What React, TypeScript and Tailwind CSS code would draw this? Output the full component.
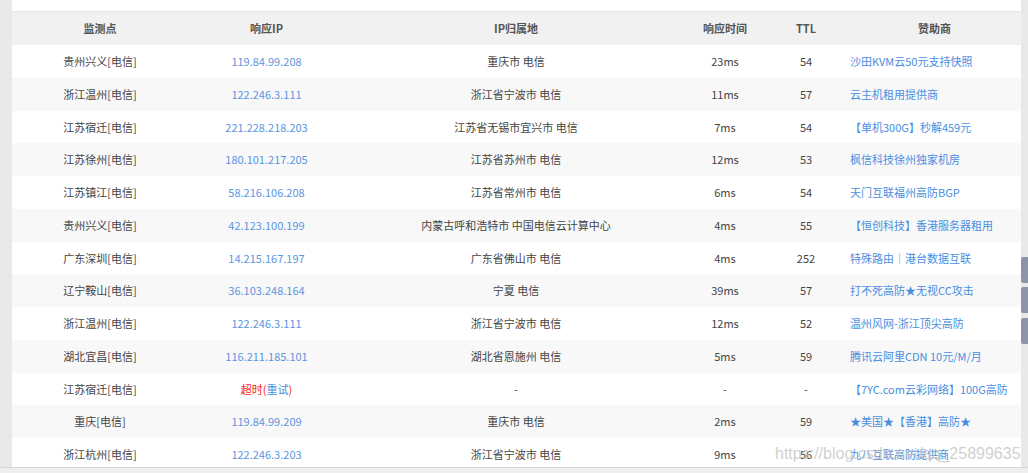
const rows = [
  { loc: "贵州兴义[电信]", ip: "119.84.99.208", area: "重庆市 电信", time: "23ms", ttl: "54", sponsor: "沙田KVM云50元支持快照" },
  { loc: "浙江温州[电信]", ip: "122.246.3.111", area: "浙江省宁波市 电信", time: "11ms", ttl: "57", sponsor: "云主机租用提供商" },
  { loc: "江苏宿迁[电信]", ip: "221.228.218.203", area: "江苏省无锡市宜兴市 电信", time: "7ms", ttl: "54", sponsor: "【单机300G】秒解459元" },
  { loc: "江苏徐州[电信]", ip: "180.101.217.205", area: "江苏省苏州市 电信", time: "12ms", ttl: "53", sponsor: "枫信科技徐州独家机房" },
  { loc: "江苏镇江[电信]", ip: "58.216.106.208", area: "江苏省常州市 电信", time: "6ms", ttl: "54", sponsor: "天门互联福州高防BGP" },
  { loc: "贵州兴义[电信]", ip: "42.123.100.199", area: "内蒙古呼和浩特市 中国电信云计算中心", time: "4ms", ttl: "55", sponsor: "【恒创科技】香港服务器租用" },
  { loc: "广东深圳[电信]", ip: "14.215.167.197", area: "广东省佛山市 电信", time: "4ms", ttl: "252", sponsor: "特殊路由｜港台数据互联" },
  { loc: "辽宁鞍山[电信]", ip: "36.103.248.164", area: "宁夏 电信", time: "39ms", ttl: "57", sponsor: "打不死高防★无视CC攻击" },
  { loc: "浙江温州[电信]", ip: "122.246.3.111", area: "浙江省宁波市 电信", time: "12ms", ttl: "52", sponsor: "温州风网-浙江顶尖高防" },
  { loc: "湖北宜昌[电信]", ip: "116.211.185.101", area: "湖北省恩施州 电信", time: "5ms", ttl: "59", sponsor: "腾讯云阿里CDN 10元/M/月" },
  { loc: "江苏宿迁[电信]", ip: "", area: "-", time: "-", ttl: "-", sponsor: "【7YC.com云彩网络】100G高防" },
  { loc: "重庆[电信]", ip: "119.84.99.209", area: "重庆市 电信", time: "2ms", ttl: "59", sponsor: "★美国★【香港】高防★" },
  { loc: "浙江杭州[电信]", ip: "122.246.3.203", area: "浙江省宁波市 电信", time: "9ms", ttl: "56", sponsor: "九八互联高防提供商" },
];

const cols = "grid grid-cols-[176px_157px_342px_76px_86px_171px]";

export default function App() {
  return (
    <div
      className="relative flex h-[473px] w-[1028px] flex-col overflow-hidden bg-[#e9e9e9] text-[11px]"
      style={{ fontFamily: '"Noto Sans CJK SC", "Noto Sans", sans-serif' }}
    >
      <div className="flex min-h-0 flex-1">
        {/* left gutter */}
        <div className="w-[12px] shrink-0 bg-[#e9e9e9]" />

        {/* table */}
        <div className="flex w-[1009px] shrink-0 flex-col bg-white">
          <div className="h-[12px] shrink-0 border-b border-[#e6e6e6] bg-white" />
          <div className={`${cols} h-[33px] shrink-0 items-center bg-[#f1f1f1] font-bold text-[#555]`}>
            <div className="text-center">监测点</div>
            <div className="text-center">响应IP</div>
            <div className="text-center">IP归属地</div>
            <div className="text-center">响应时间</div>
            <div className="text-center">TTL</div>
            <div className="text-center">赞助商</div>
          </div>
          {rows.map((r, i) => (
            <div
              key={i}
              className={`${cols} h-[32.75px] shrink-0 items-center ${i % 2 === 1 ? "bg-[#f8f8f8]" : "bg-white"} text-[#444]`}
            >
              <div className="text-center">{r.loc}</div>
              <div className="text-center text-[#5b95e0]">
                {r.ip ? (
                  r.ip
                ) : (
                  <>
                    <span className="text-[#ff1a1a]">超时</span>
                    <span className="text-[#ff1a1a]">(</span>
                    <span className="text-[#4a8ee0]">重试</span>
                    <span className="text-[#ff1a1a]">)</span>
                  </>
                )}
              </div>
              <div className="text-center">{r.area}</div>
              <div className="text-center">{r.time}</div>
              <div className="text-center">{r.ttl}</div>
              <div className="whitespace-nowrap pl-[1px] text-[#4a8ee0]">{r.sponsor}</div>
            </div>
          ))}
        </div>

        {/* right gutter with side tabs */}
        <div className="flex w-[7px] shrink-0 flex-col bg-[#e9e9e9] pt-[257px]">
          <div className="h-[26px] rounded-l-[2px] bg-[#8b94a8]" />
          <div className="mt-[4px] h-[26px] rounded-l-[2px] bg-[#8b94a8]" />
          <div className="mt-[5px] h-[26px] rounded-l-[2px] bg-[#8b94a8]" />
        </div>
      </div>

      {/* bottom strip */}
      <div className="h-[6px] shrink-0 border-t border-[#d4d4d4] bg-[#efefef]" />

      {/* watermark */}
      <div
        className="pointer-events-none absolute left-[775px] top-[446px] text-[16px] leading-none text-[#c4c4c4]/80"
        style={{ fontFamily: '"Liberation Sans", Arial, sans-serif' }}
      >
        https://blog.csdn.net/qq_25899635
      </div>
    </div>
  );
}
